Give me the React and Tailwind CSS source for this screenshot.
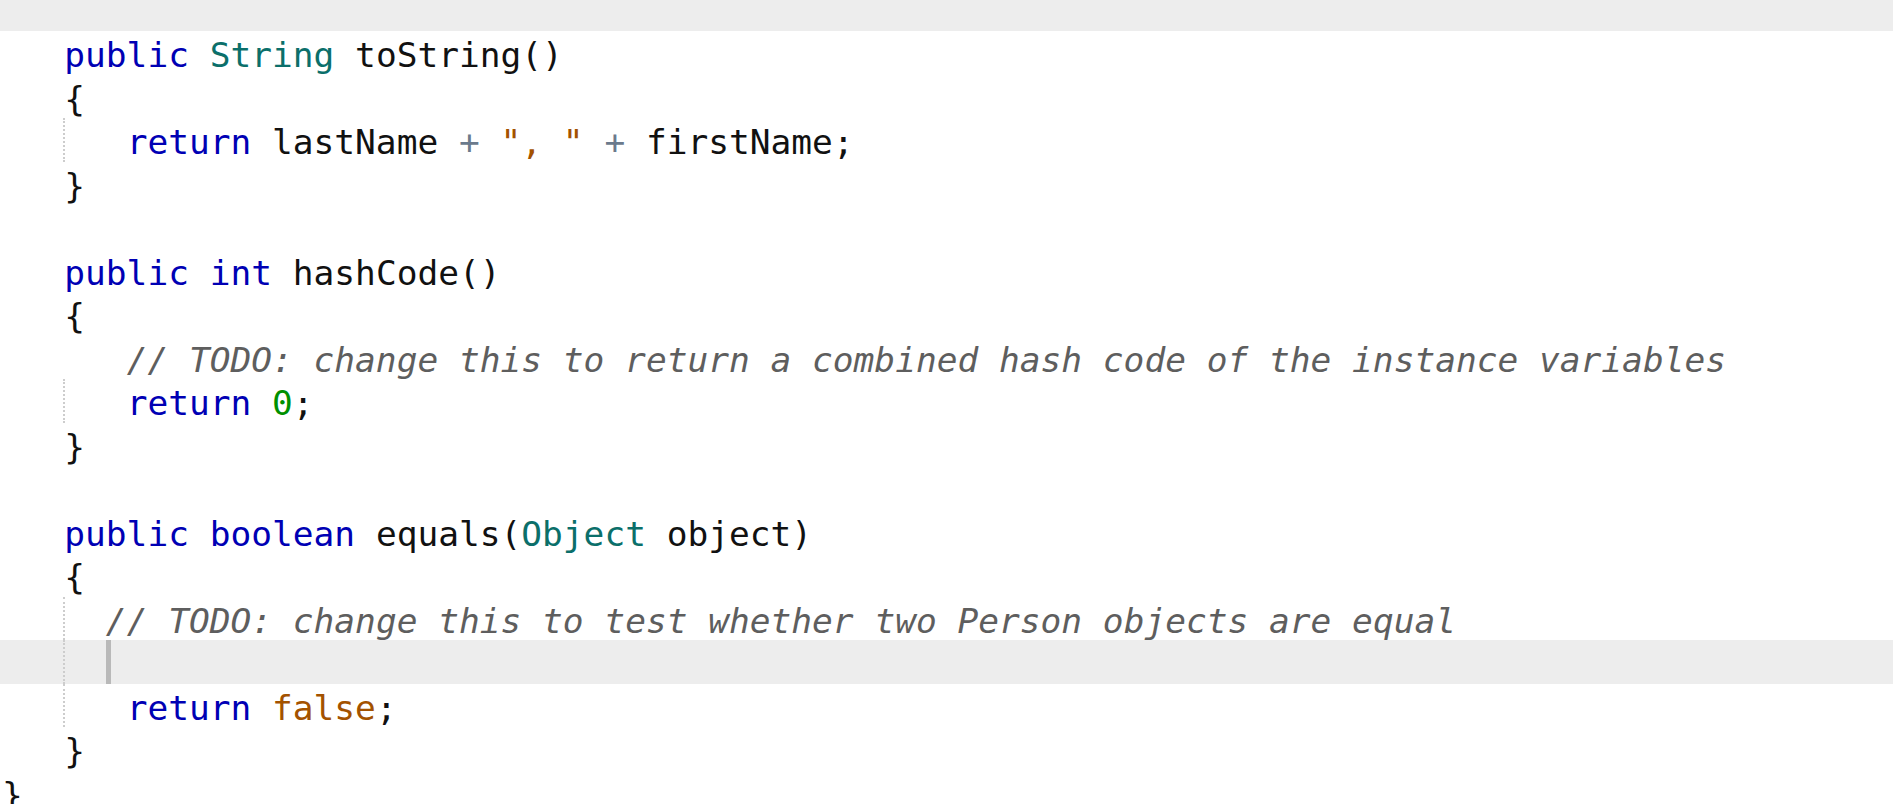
import React from 'react';

const KW = 'text-[#0000b4]';
const TYPE = 'text-[#0b6f6a]';
const STR = 'text-[#a35200]';
const NUM = 'text-[#009000]';
const OP = 'text-[#6b7a8c]';
const CMT = 'text-[#5e5e5e] italic';

// each line: [tokens, options]
const lines = [
  { t: [['   '], ['public', KW], [' '], ['String', TYPE], [' toString()']] },
  { t: [['   {']] },
  { t: [['      '], ['return', KW], [' lastName '], ['+', OP], [' '], ['", "', STR], [' '], ['+', OP], [' firstName;']], guide: true },
  { t: [['   }']] },
  { t: [] },
  { t: [['   '], ['public', KW], [' '], ['int', KW], [' hashCode()']] },
  { t: [['   {']] },
  { t: [['      '], ['// TODO: change this to return a combined hash code of the instance variables', CMT]] },
  { t: [['      '], ['return', KW], [' '], ['0', NUM], [';']], guide: true },
  { t: [['   }']] },
  { t: [] },
  { t: [['   '], ['public', KW], [' '], ['boolean', KW], [' equals('], ['Object', TYPE], [' object)']] },
  { t: [['   {']] },
  { t: [['     '], ['// TODO: change this to test whether two Person objects are equal', CMT]], guide: true },
  { t: [], guide: true, current: true },
  { t: [['      '], ['return', KW], [' '], ['false', STR], [';']], guide: true },
  { t: [['   }']] },
  { t: [['}']] },
];

function CodeLine({ line }) {
  return (
    <div
      className={`relative h-[43.5px] shrink-0 pt-[6px] pl-[2px] leading-[37.5px] whitespace-pre ${
        line.current ? 'bg-[#ededed]' : ''
      }`}
    >
      {line.guide && (
        <span className="absolute left-[63px] top-0 bottom-0 border-l-2 border-dotted border-[#cdcdcd]" />
      )}
      {line.current && <span className="absolute left-[106px] top-0 bottom-0 w-[5px] bg-[#b9b9b9]" />}
      {line.t.map(([text, cls], i) => (
        <span key={i} className={cls || 'text-[#111111]'}>
          {text}
        </span>
      ))}
    </div>
  );
}

export default function App() {
  return (
    <div className="w-full h-[804px] overflow-hidden bg-white flex flex-col">
      {/* top strip */}
      <div className="h-[31px] shrink-0 bg-[#ededed]" />

      {/* editor */}
      <div className="flex flex-col text-[34.5px] font-['DejaVu_Sans_Mono',monospace]">
        {lines.map((line, i) => (
          <CodeLine key={i} line={line} />
        ))}
      </div>
    </div>
  );
}
